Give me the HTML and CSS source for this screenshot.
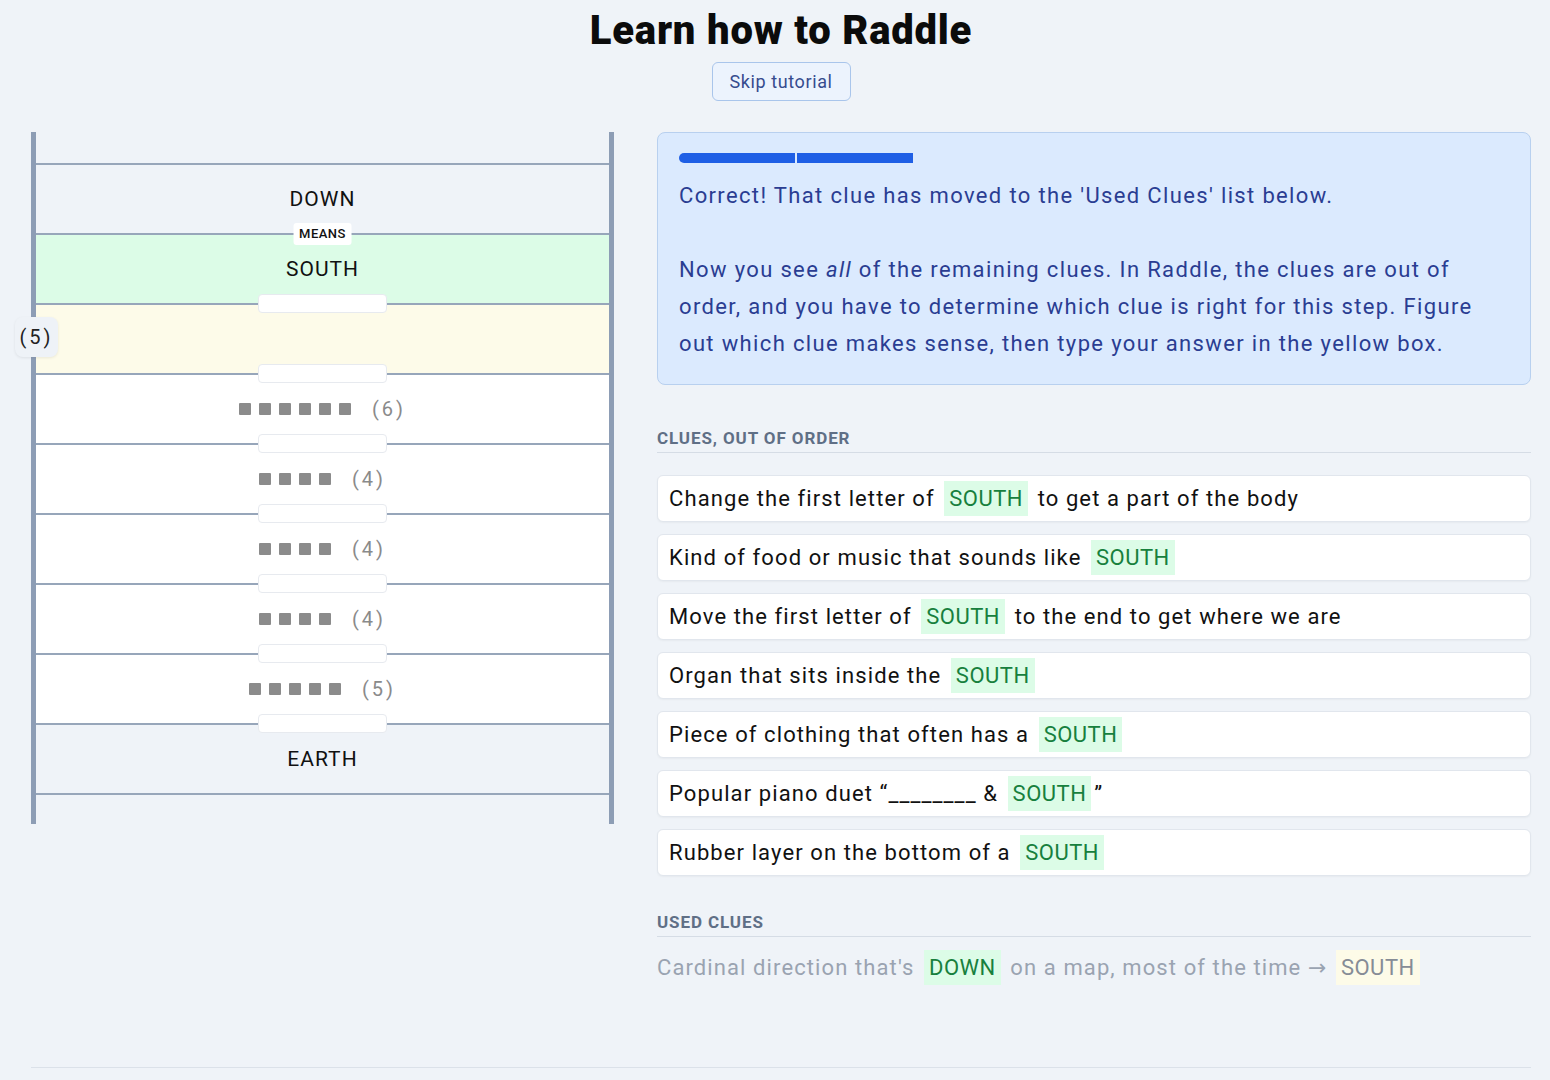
FILE: index.html
```html
<!DOCTYPE html>
<html lang="en">
<head>
  <meta charset="UTF-8">
  <meta name="viewport" content="width=device-width, initial-scale=1.0">
  <title>Learn how to Raddle</title>
  <link rel="stylesheet" href="styles.css">
</head>
<body>
<div class="page">
  <div class="header">
    <h1>Learn how to Raddle</h1>
    <button class="btn-skip">Skip tutorial</button>
  </div>

  <div class="main">
    <div class="ladder">
      <div class="ladder-top"></div>
      <div class="rung rung-given">DOWN</div>
      <div class="rung rung-solved">
        <span class="means">MEANS</span>
        SOUTH
      </div>
      <div class="rung rung-active">
        <span class="plate"></span>
        <span class="len-badge">(5)</span>
      </div>
      <div class="rung rung-blank">
        <span class="plate"></span>
        <span class="squares"><i></i><i></i><i></i><i></i><i></i><i></i></span>
        <span class="len">(6)</span>
      </div>
      <div class="rung rung-blank">
        <span class="plate"></span>
        <span class="squares"><i></i><i></i><i></i><i></i></span>
        <span class="len">(4)</span>
      </div>
      <div class="rung rung-blank">
        <span class="plate"></span>
        <span class="squares"><i></i><i></i><i></i><i></i></span>
        <span class="len">(4)</span>
      </div>
      <div class="rung rung-blank">
        <span class="plate"></span>
        <span class="squares"><i></i><i></i><i></i><i></i></span>
        <span class="len">(4)</span>
      </div>
      <div class="rung rung-blank">
        <span class="plate"></span>
        <span class="squares"><i></i><i></i><i></i><i></i><i></i></span>
        <span class="len">(5)</span>
      </div>
      <div class="rung rung-given">
        <span class="plate"></span>
        EARTH
      </div>
      <div class="ladder-bottom"></div>
    </div>

    <div class="side">
      <div class="tip">
        <div class="progress">
          <span class="step step-first"></span>
          <span class="step"></span>
        </div>
        <p>Correct! That clue has moved to the 'Used Clues' list below.<br><br>Now you see <em>all</em> of the remaining clues. In Raddle, the clues are out of order, and you have to determine which clue is right for this step. Figure out which clue makes sense, then type your answer in the yellow box.</p>
      </div>

      <h3 class="list-title">CLUES, OUT OF ORDER</h3>
      <ul class="clues">
        <li>Change the first letter of <span class="word">SOUTH</span> to get a part of the body</li>
        <li>Kind of food or music that sounds like <span class="word">SOUTH</span></li>
        <li>Move the first letter of <span class="word">SOUTH</span> to the end to get where we are</li>
        <li>Organ that sits inside the <span class="word">SOUTH</span></li>
        <li>Piece of clothing that often has a <span class="word">SOUTH</span></li>
        <li>Popular piano duet “________ &amp; <span class="word">SOUTH</span>”</li>
        <li>Rubber layer on the bottom of a <span class="word">SOUTH</span></li>
      </ul>

      <h3 class="list-title used-title">USED CLUES</h3>
      <p class="used">Cardinal direction that's <span class="word">DOWN</span> on a map, most of the time <span class="arrow">→</span> <span class="word answer">SOUTH</span></p>
    </div>
  </div>

  <div class="footer-line"></div>
</div>
</body>
</html>
```

FILE: styles.css
```css
body {
  font-family: Roboto, "Noto Sans", sans-serif;
  background-color: #eff3f8;
  color: #111;
  margin: 0;
  padding: 0;
}

.page {
  width: 1500px;
  margin-left: 31px;
}

.header {
  text-align: center;
  padding-top: 8px;
}

h1 {
  margin: 0;
  font-size: 40px;
  font-weight: 900;
  letter-spacing: 0.8px;
  line-height: 46px;
  color: #0b0b0b;
}

.btn-skip {
  margin-top: 8px;
  width: 139px;
  height: 39px;
  font-family: inherit;
  font-size: 18px;
  letter-spacing: 0.6px;
  color: #364b8e;
  background-color: #ecf3fd;
  border: 1px solid #a9c5eb;
  border-radius: 6px;
  cursor: pointer;
}

.main {
  display: flex;
  align-items: flex-start;
  gap: 43px;
  margin-top: 31px;
}

/* ladder */
.ladder {
  width: 573px;
  border-left: 5px solid #8d9db5;
  border-right: 5px solid #8d9db5;
  flex-shrink: 0;
}

.ladder-top {
  height: 31px;
}

.ladder-bottom {
  height: 29px;
  border-top: 2px solid #97a6ba;
}

.rung {
  position: relative;
  box-sizing: border-box;
  height: 70px;
  border-top: 2px solid #97a6ba;
  display: flex;
  align-items: center;
  justify-content: center;
  font-size: 21px;
  letter-spacing: 1px;
  color: #111;
}

.rung-solved {
  background-color: #dcfce7;
}

.rung-active {
  background-color: #fdfbe9;
}

.rung-blank {
  background-color: #ffffff;
}

.plate {
  position: absolute;
  top: -11px;
  left: 50%;
  margin-left: -65px;
  width: 129px;
  height: 19px;
  box-sizing: border-box;
  background-color: #ffffff;
  border: 1px solid #e7eaef;
  border-radius: 4px;
}

.means {
  position: absolute;
  top: -12px;
  left: 50%;
  transform: translateX(-50%);
  background-color: #ffffff;
  padding: 3px 6px;
  border-radius: 3px;
  font-size: 13px;
  font-weight: 500;
  letter-spacing: 0.5px;
  line-height: 16px;
}

.len-badge {
  position: absolute;
  left: -21px;
  top: 12px;
  width: 43px;
  height: 40px;
  display: flex;
  align-items: center;
  justify-content: center;
  background-color: #eef2f7;
  border-radius: 8px;
  box-shadow: 0 1px 3px rgba(0, 0, 0, 0.08);
  font-size: 20px;
  letter-spacing: 3px;
  color: #222;
}

.squares {
  display: flex;
  gap: 8px;
}

.squares i {
  width: 12px;
  height: 12px;
  background-color: #8b8b8b;
  border-radius: 1px;
}

.len {
  margin-left: 21px;
  font-size: 20px;
  letter-spacing: 3px;
  color: #8a8a8a;
}

/* right side */
.side {
  flex: 1;
}

.tip {
  background-color: #dbeafe;
  border: 1px solid #b8d0ef;
  border-radius: 8px;
  padding: 20px 21px 22px;
}

.progress {
  display: flex;
  gap: 2px;
}

.step {
  width: 116px;
  height: 10px;
  background-color: #1f5fe5;
}

.step-first {
  border-radius: 5px 0 0 5px;
}

.tip p {
  margin: 14px 0 0;
  font-size: 22px;
  letter-spacing: 1.35px;
  line-height: 37px;
  color: #2a3d92;
}

.list-title {
  margin: 43px 0 0;
  padding-bottom: 4px;
  border-bottom: 1px solid #d5dce5;
  font-size: 17px;
  font-weight: 700;
  color: #5f6f86;
  letter-spacing: 0.9px;
}

.clues {
  list-style: none;
  margin: 22px 0 0;
  padding: 0;
}

.clues li {
  box-sizing: border-box;
  height: 47px;
  margin-bottom: 12px;
  padding: 0 11px;
  display: flex;
  align-items: center;
  white-space: pre;
  background-color: #ffffff;
  border: 1px solid #e1e6ed;
  border-radius: 6px;
  box-shadow: 0 1px 2px rgba(0, 0, 0, 0.04);
  font-size: 22px;
  letter-spacing: 1.1px;
  color: #111;
}

.word {
  display: inline-block;
  margin: 0 3px;
  padding: 0 5px;
  line-height: 35px;
  letter-spacing: 0.5px;
  background-color: #dcfce7;
  color: #17803d;
}

.used-title {
  margin-top: 36px;
}

.used {
  margin: 13px 0 0;
  font-size: 22px;
  letter-spacing: 1.1px;
  color: #9aa3b1;
}

.used .answer {
  background-color: #fdfbe8;
  color: #868c96;
}

.arrow {
  font-family: "DejaVu Sans", sans-serif;
  font-size: 22px;
  letter-spacing: 0;
}

.footer-line {
  margin-top: 82px;
  height: 1px;
  background-color: #dbe1e9;
}
```
